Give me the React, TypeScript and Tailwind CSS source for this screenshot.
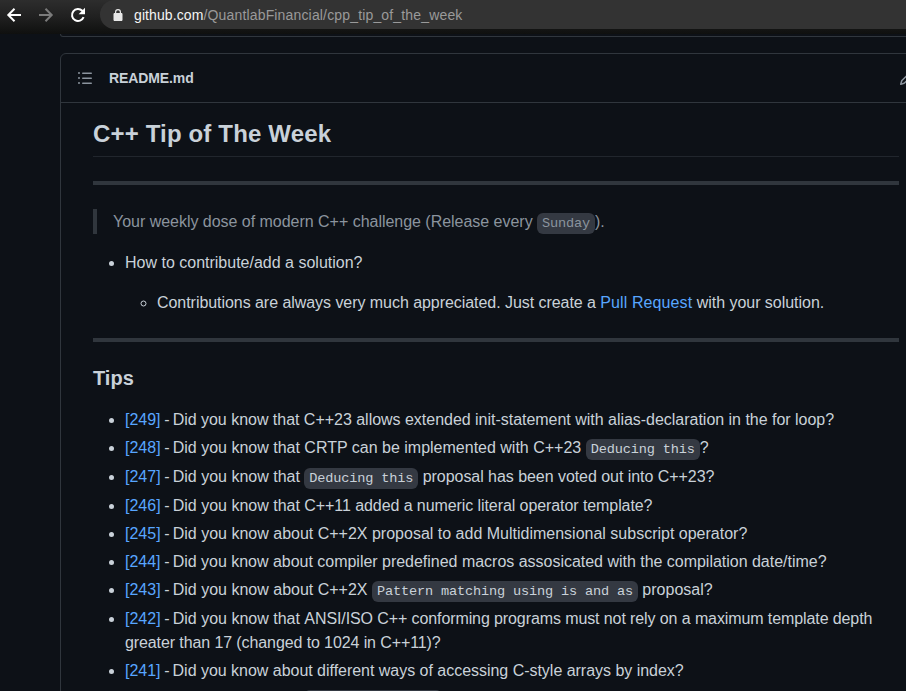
import type { ReactNode } from "react";

function Code({ children }: { children: ReactNode }) {
  return (
    <code className="rounded-[6px] bg-[#343942] px-[5px] py-[0.2em] font-['Liberation_Mono',monospace] text-[13.6px] leading-none tracking-[-0.16px]">
      {children}
    </code>
  );
}

function Link({ children }: { children: ReactNode }) {
  return <a className="text-[#58a6ff]">{children}</a>;
}

const tips: { id: number; tracking?: string; body: ReactNode }[] = [
  { id: 249, tracking: "tracking-[-0.022px]", body: "Did you know that C++23 allows extended init-statement with alias-declaration in the for loop?" },
  { id: 248, tracking: "block pb-px", body: <>Did you know that CRTP can be implemented with C++23 <Code>Deducing this</Code>?</> },
  { id: 247, tracking: "block pb-px", body: <>Did you know that <Code>Deducing this</Code><span className="tracking-[-0.05px]"> proposal has been voted out into C++23?</span></> },
  { id: 246, body: <>Did you know that <span className="tracking-[-0.08px]">C++11 added a numeric literal operator template?</span></> },
  { id: 245, body: "Did you know about C++2X proposal to add Multidimensional subscript operator?" },
  { id: 244, tracking: "tracking-[-0.018px]", body: "Did you know about compiler predefined macros assosicated with the compilation date/time?" },
  { id: 243, tracking: "block pb-px", body: <>Did you know about C++2X <Code>Pattern matching using is and as</Code> proposal?</> },
  { id: 242, body: <>Did you know that <span className="tracking-[-0.1px]">ANSI/ISO C++ conforming programs must not rely on a maximum template depth greater than 17 (changed to 1024 in C++11)?</span></> },
  { id: 241, tracking: "tracking-[-0.025px]", body: "Did you know about different ways of accessing C-style arrays by index?" },
  { id: 240, body: <>Did you know that <Code>static constexpr</Code></> },
];

function Toolbar() {
  return (
    <header className="flex h-[34px] shrink-0 items-start bg-linear-to-b from-[#2d2d2d] via-[#202020] to-[#0f100f]">
      <svg className="mt-[7px] ml-[6px] size-4 shrink-0" viewBox="0 0 16 16" fill="none" stroke="#fff" strokeWidth="2">
        <path d="M15 8H2.8M8.5 1.8 2.3 8l6.2 6.2" />
      </svg>
      <svg className="mt-[7px] ml-4 size-4 shrink-0" viewBox="0 0 16 16" fill="none" stroke="#7b7b7b" strokeWidth="2">
        <path d="M1 8h12.2M7.5 1.8 13.7 8l-6.2 6.2" />
      </svg>
      <svg className="mt-[7px] ml-4 size-4 shrink-0" viewBox="0 0 16 16" fill="none" stroke="#fff" strokeWidth="2">
        <path d="M13.6 10.2A6 6 0 1 1 12.3 3.8L14 5.5" />
        <path d="M15 .8v6.4H8.6z" fill="#fff" stroke="none" />
      </svg>
      <div className="ml-[14px] flex h-[29px] flex-1 items-center rounded-l-full bg-[#333333] pl-[13px]">
        <svg className="h-[12px] w-[10px] shrink-0" viewBox="0 0 10 12">
          <path d="M1 4.5h8v7H1z" fill="#e8e8e8" stroke="#e8e8e8" strokeLinejoin="round" />
          <path d="M2.6 5V3a2.4 2.4 0 0 1 4.8 0v2" fill="none" stroke="#e8e8e8" strokeWidth="1.2" />
        </svg>
        <span className="ml-[11px] pt-[2px] text-[14px] tracking-[0.16px] whitespace-nowrap text-[#9a9a9a]">
          <span className="tracking-[0.1px] text-[#f5f5f5]">github.com</span>/QuantlabFinancial/cpp_tip_of_the_week
        </span>
      </div>
    </header>
  );
}

export default function App() {
  return (
    <div className="flex h-[691px] w-[906px] flex-col overflow-hidden bg-[#0d1117] font-['Liberation_Sans',Arial,sans-serif] text-[#c9d1d9]">
      <Toolbar />
      <div className="ml-[60px] h-[3px] w-[872px] shrink-0 rounded-b-[6px] border-x border-b border-[#30363d]" />
      <section className="mt-4 ml-[60px] w-[872px] shrink-0 rounded-[6px] border border-[#30363d]">
        <div className="box-content flex h-12 items-center border-b border-[#30363d] pl-4 text-[14px] font-bold">
          <svg className="size-4" viewBox="0 0 16 16" fill="#8b949e">
            <path d="M2 4a1 1 0 1 0 0-2 1 1 0 0 0 0 2zm3.75-1.5a.75.75 0 0 0 0 1.5h8.5a.75.75 0 0 0 0-1.5h-8.5zm0 5a.75.75 0 0 0 0 1.5h8.5a.75.75 0 0 0 0-1.5h-8.5zm0 5a.75.75 0 0 0 0 1.5h8.5a.75.75 0 0 0 0-1.5h-8.5zM3 8a1 1 0 1 1-2 0 1 1 0 0 1 2 0zm-1 6a1 1 0 1 0 0-2 1 1 0 0 0 0 2z" />
          </svg>
          <h2 className="ml-4 tracking-[-0.1px]">README.md</h2>
          <svg className="mr-4 ml-auto size-4" viewBox="0 0 16 16" fill="#8b949e">
            <path fillRule="evenodd" d="M11.013 1.427a1.75 1.75 0 0 1 2.474 0l1.086 1.086a1.75 1.75 0 0 1 0 2.474l-8.61 8.61c-.21.21-.47.364-.756.445l-3.251.93a.75.75 0 0 1-.927-.928l.929-3.25a1.75 1.75 0 0 1 .445-.758l8.61-8.61zm1.414 1.06a.25.25 0 0 0-.354 0L10.811 3.75l1.439 1.44 1.263-1.263a.25.25 0 0 0 0-.354l-1.086-1.086zM11.189 6.25 9.75 4.81l-6.286 6.287a.25.25 0 0 0-.064.108l-.558 1.953 1.953-.558a.249.249 0 0 0 .108-.064l6.286-6.286z" />
          </svg>
        </div>
        <article className="px-8 pt-4 text-[16px] leading-6">
          <h1 className="border-b border-[#21262d] pb-[7px] text-[24px] leading-[30px] font-bold tracking-[0.16px]">C++ Tip of The Week</h1>
          <hr className="my-6 h-1 border-0 bg-[#30363d]" />
          <blockquote className="mb-4 border-l-4 border-[#30363d] px-4 pt-px tracking-[-0.025px] text-[#8b949e]">
            Your weekly dose of modern C++ challenge (Release every <Code>Sunday</Code>).
          </blockquote>
          <ul className="list-disc pt-px pl-8">
            <li>
              <p>How to contribute/add a solution?</p>
              <ul className="mt-4 list-[circle] pl-8">
                <li>
                  <span className="tracking-[-0.05px]">Contributions are always very much appreciated. Just create a </span>
                  <span className="tracking-[0.1px]"><Link>Pull Request</Link></span><span className="tracking-[-0.03px]"> with your solution.</span>
                </li>
              </ul>
            </li>
          </ul>
          <hr className="mt-[23px] mb-6 h-1 border-0 bg-[#30363d]" />
          <h3 className="mb-4 text-[20px] leading-[25px] font-bold">Tips</h3>
          <ul className="flex list-disc flex-col gap-1 pt-px pl-8">
            {tips.map((tip) => (
              <li key={tip.id}>
                <span className={tip.tracking}>
                  <Link>[{tip.id}]</Link><span className="tracking-[-0.7px]"> - </span>{tip.body}
                </span>
              </li>
            ))}
          </ul>
        </article>
      </section>
    </div>
  );
}
